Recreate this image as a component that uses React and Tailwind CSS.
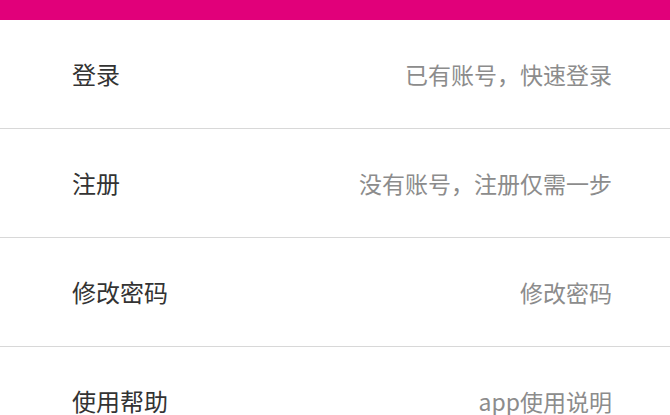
const items = [
  { title: '登录', desc: '已有账号，快速登录' },
  { title: '注册', desc: '没有账号，注册仅需一步' },
  { title: '修改密码', desc: '修改密码' },
  { title: '使用帮助', desc: 'app使用说明' },
];

export default function App() {
  return (
    <div
      className="w-[670px] h-[415px] overflow-hidden bg-white"
      style={{ fontFamily: '"Noto Sans CJK SC", "Noto Sans", sans-serif' }}
    >
      <div className="h-[20px] bg-[#e1007a]" />
      {items.map((item) => (
        <div
          key={item.title}
          className="h-[109px] flex items-center justify-between pl-[72px] pr-[58px] border-b border-[#d8d8d8]"
        >
          <span className="text-[24px] leading-none text-[#333333]">{item.title}</span>
          <span className="text-[23px] leading-none text-[#8c8c8c]">{item.desc}</span>
        </div>
      ))}
    </div>
  );
}
